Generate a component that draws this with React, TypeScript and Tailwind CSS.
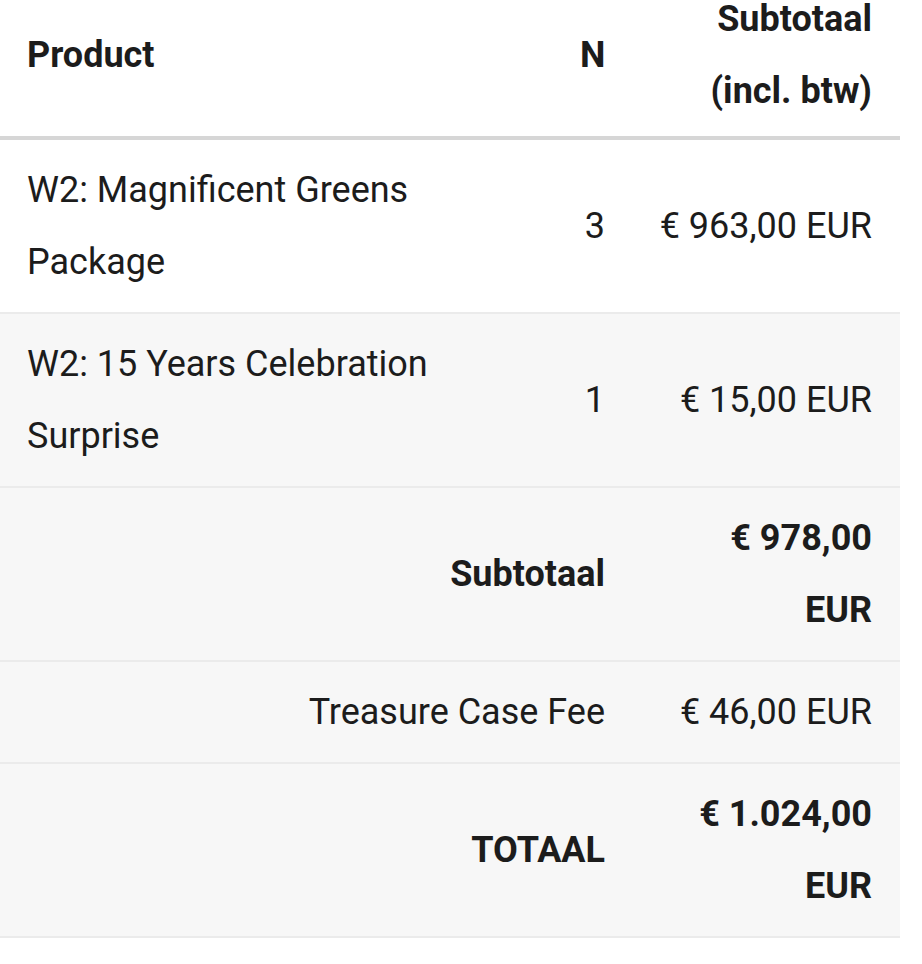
import React from 'react';

const items = [
  { name: 'W2: Magnificent Greens Package', qty: 3, price: '€ 963,00 EUR' },
  { name: 'W2: 15 Years Celebration Surprise', qty: 1, price: '€ 15,00 EUR' },
];

const App = () => {
  return (
    <div className="min-h-screen bg-white overflow-hidden">
      <table className="-mt-[31px] w-[900px] table-fixed border-collapse font-['Roboto',sans-serif] text-[36px] leading-[72px] text-[#1c1c1c]">
        <colgroup>
          <col className="w-[553px]" />
          <col className="w-[79px]" />
          <col className="w-[268px]" />
        </colgroup>
        <thead>
          <tr className="border-b-4 border-[#d6d6d6] bg-white">
            <th className="pl-[27px] pr-[27px] pt-[14px] pb-[9px] text-left font-bold">Product</th>
            <th className="px-[27px] pt-[14px] pb-[9px] text-right font-bold">N</th>
            <th className="pl-[27px] pr-[28px] pt-[14px] pb-[9px] text-right font-bold">
              <span className="block">Subtotaal</span>
              <span className="block">(incl. btw)</span>
            </th>
          </tr>
        </thead>
        <tbody>
          {items.map((item, i) => (
            <tr key={item.name} className={`border-b-2 border-[#ebebeb] ${i === 0 ? 'bg-white' : 'bg-[#f7f7f7]'}`}>
              <td className="px-[27px] pt-[14px] pb-[14px] text-left align-middle">{item.name}</td>
              <td className="px-[27px] pt-[14px] pb-[14px] text-right align-middle">{item.qty}</td>
              <td className="pl-[27px] pr-[28px] pt-[14px] pb-[14px] text-right align-middle whitespace-nowrap">{item.price}</td>
            </tr>
          ))}
          <tr className="border-b-2 border-[#ebebeb] bg-[#f7f7f7]">
            <th colSpan={2} className="px-[27px] pt-[14px] pb-[14px] text-right font-bold">Subtotaal</th>
            <td className="pl-[27px] pr-[28px] pt-[14px] pb-[14px] text-right font-bold">
              <span className="block">€ 978,00</span>
              <span className="block">EUR</span>
            </td>
          </tr>
          <tr className="border-b-2 border-[#ebebeb] bg-[#f7f7f7]">
            <td colSpan={2} className="px-[27px] pt-[14px] pb-[14px] text-right">Treasure Case Fee</td>
            <td className="pl-[27px] pr-[28px] pt-[14px] pb-[14px] text-right whitespace-nowrap">€ 46,00 EUR</td>
          </tr>
          <tr className="border-b-2 border-[#ebebeb] bg-[#f7f7f7]">
            <th colSpan={2} className="px-[27px] pt-[14px] pb-[14px] text-right font-bold">TOTAAL</th>
            <td className="pl-[27px] pr-[28px] pt-[14px] pb-[14px] text-right font-bold">
              <span className="block">€ 1.024,00</span>
              <span className="block">EUR</span>
            </td>
          </tr>
        </tbody>
      </table>
    </div>
  );
};

export default App;
